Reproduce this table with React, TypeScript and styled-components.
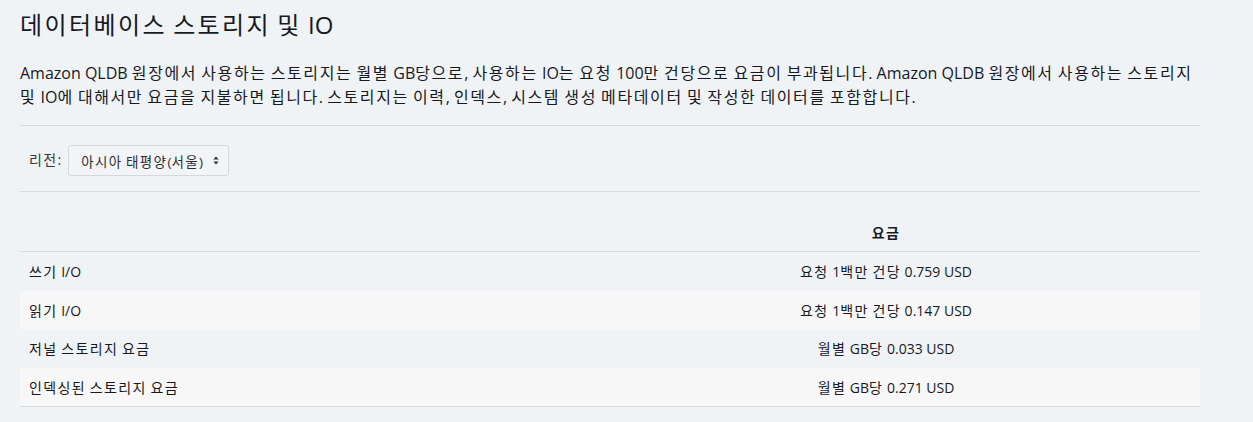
import React from "react";
import styled, { createGlobalStyle } from "styled-components";

const Global = createGlobalStyle`
  html, body { margin: 0; padding: 0; }
  body {
    background: #f0f3f6;
    color: #16191f;
    font-family: "Open Sans", "Noto Sans CJK KR", sans-serif;
  }
`;

const Hangul = styled.span`
  letter-spacing: 0.1em;
`;

const HANGUL_RE = /([\uAC00-\uD7A3]+)/;

function K({ children }: { children: string }) {
  const parts = children.split(HANGUL_RE);
  return (
    <span>
      {parts.map((p, i) =>
        i % 2 === 1 ? <Hangul key={i}>{p}</Hangul> : <React.Fragment key={i}>{p}</React.Fragment>
      )}
    </span>
  );
}

const Page = styled.div`
  width: 1180px;
  padding: 10px 20px 0 20px;
`;

const Title = styled.h2`
  margin: 0;
  font-size: 24px;
  font-weight: 400;
  line-height: 29px;
  color: #16191f;
`;

const Lead = styled.p`
  margin: 22px 0 16px 0;
  font-size: 16px;
  line-height: 24px;
  color: #16191f;
`;

const Rule = styled.hr`
  margin: 0;
  border: 0;
  border-top: 1px solid #d7dadd;
`;

const FilterRow = styled.div`
  display: flex;
  align-items: center;
  gap: 7px;
  padding: 19px 0 15px 9px;
`;

const Label = styled.span`
  font-size: 14px;
  color: #33373b;
  padding-bottom: 3px;
`;

const Select = styled.div`
  display: flex;
  align-items: center;
  gap: 10px;
  height: 29px;
  padding: 0 9px 0 12px;
  border: 1px solid #d5d9dd;
  border-radius: 3px;
  background: #f2f4f7;
  font-size: 13.5px;
  color: #2a2e33;
`;

const Table = styled.div`
  margin-top: 21px;
  display: grid;
  grid-template-columns: 552px 1fr;
  grid-template-rows: 39px repeat(4, 38.5px);
  border-bottom: 1px solid #d7dadd;
`;

const Row = styled.div<{ $striped?: boolean; $head?: boolean }>`
  display: contents;
  & > div {
    background: ${(p) => (p.$striped ? "#f7f7f7" : "transparent")};
    border-bottom: ${(p) => (p.$head ? "1px solid #d7dadd" : "none")};
    font-weight: ${(p) => (p.$head ? 700 : 400)};
  }
`;

const Cell = styled.div<{ $center?: boolean }>`
  display: flex;
  align-items: center;
  justify-content: ${(p) => (p.$center ? "center" : "flex-start")};
  padding: 0 9px;
  font-size: 14px;
  color: #16191f;
`;

const rows = [
  ["쓰기 I/O", "요청 1백만 건당 0.759 USD"],
  ["읽기 I/O", "요청 1백만 건당 0.147 USD"],
  ["저널 스토리지 요금", "월별 GB당 0.033 USD"],
  ["인덱싱된 스토리지 요금", "월별 GB당 0.271 USD"],
];

export default function App() {
  return (
    <>
      <Global />
      <Page>
        <Title>
          <K>데이터베이스 스토리지 및 IO</K>
        </Title>
        <Lead>
          <K>
            Amazon QLDB 원장에서 사용하는 스토리지는 월별 GB당으로, 사용하는 IO는 요청 100만 건당으로 요금이 부과됩니다. Amazon QLDB 원장에서 사용하는 스토리지 및 IO에 대해서만 요금을 지불하면 됩니다. 스토리지는 이력, 인덱스, 시스템 생성 메타데이터 및 작성한 데이터를 포함합니다.
          </K>
        </Lead>
        <Rule />
        <FilterRow>
          <Label>
            <K>리전:</K>
          </Label>
          <Select>
            <K>아시아 태평양(서울)</K>
            <svg width="6" height="9" viewBox="0 0 6 9">
              <path d="M3 0.5 L5.6 3.6 H0.4 Z" fill="#2a2e33" />
              <path d="M3 8.5 L5.6 5.4 H0.4 Z" fill="#2a2e33" />
            </svg>
          </Select>
        </FilterRow>
        <Rule />
        <Table>
          <Row $head>
            <Cell></Cell>
            <Cell $center>
              <K>요금</K>
            </Cell>
          </Row>
          {rows.map((r, i) => (
            <Row key={i} $striped={i % 2 === 1}>
              <Cell>
                <K>{r[0]}</K>
              </Cell>
              <Cell $center>
                <K>{r[1]}</K>
              </Cell>
            </Row>
          ))}
        </Table>
      </Page>
    </>
  );
}
